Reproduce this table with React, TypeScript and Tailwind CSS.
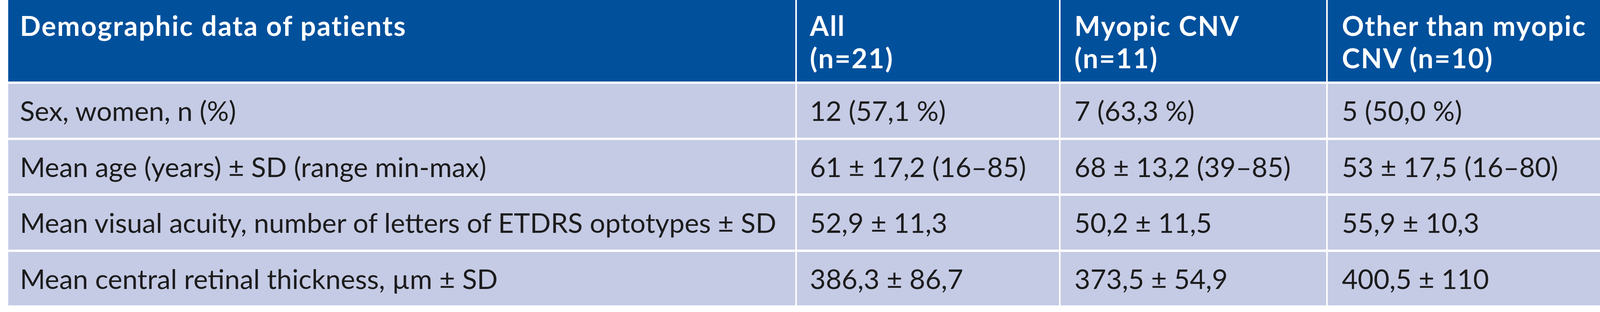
import React from "react";

const rows: string[][] = [
  ["Sex, women, n (%)", "12 (57,1 %)", "7 (63,3 %)", "5 (50,0 %)"],
  ["Mean age (years) ± SD (range min-max)", "61 ± 17,2 (16–85)", "68 ± 13,2 (39–85)", "53 ± 17,5 (16–80)"],
  ["Mean visual acuity, number of letters of ETDRS optotypes ± SD", "52,9 ± 11,3", "50,2 ± 11,5", "55,9 ± 10,3"],
  ["Mean central retinal thickness, µm ± SD", "386,3 ± 86,7", "373,5 ± 54,9", "400,5 ± 110"],
];

const pads = ["pl-[30px]", "pl-[33px]", "pl-[36px]", "pl-[36px]"];

const headCls = "h-[209px] bg-[#00509c] text-white font-bold tracking-[2.5px] pt-[24px]";

export default function App() {
  return (
    <div className="w-full h-[800px] bg-white font-['Lato',sans-serif] text-[70px] leading-[83px]">
      <div className="ml-[0.51%] grid grid-cols-[2129fr_708fr_719fr_736fr] gap-x-[4px] gap-y-[6px]">
        <div className={`${headCls} ${pads[0]}`}>Demographic data of patients</div>
        <div className={`${headCls} ${pads[1]}`}>
          All
          <br />
          (n=21)
        </div>
        <div className={`${headCls} ${pads[2]}`}>
          Myopic CNV
          <br />
          (n=11)
        </div>
        <div className={`${headCls} ${pads[3]}`}>
          Other than myopic
          <br />
          CNV (n=10)
        </div>
        {rows.map((r, i) =>
          r.map((c, j) => (
            <div
              key={`${i}-${j}`}
              className={`h-[137.5px] bg-[#c5cbe5] text-[#1c1c1c] flex items-center whitespace-nowrap ${pads[j]}`}
            >
              {c}
            </div>
          ))
        )}
      </div>
    </div>
  );
}
